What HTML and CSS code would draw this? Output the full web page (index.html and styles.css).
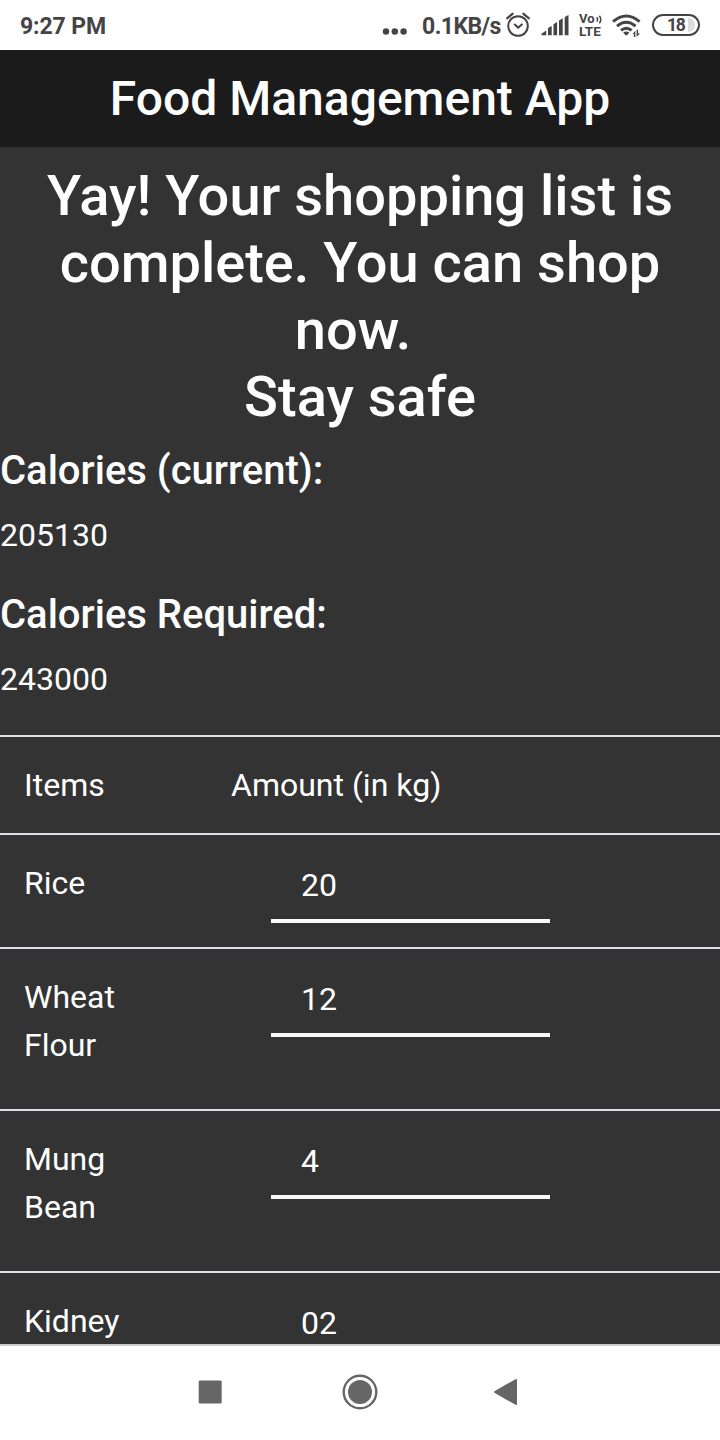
FILE: index.html
```html
<!DOCTYPE html>
<html lang="en">
<head>
<meta charset="utf-8">
<title>Food Management App</title>
<link rel="stylesheet" href="styles.css">
</head>
<body>
<div class="screen">
  <div class="status">
    <span class="clock">9:27 PM</span>
    <svg class="dots" width="26" height="8" viewBox="0 0 26 8"><circle cx="4" cy="4.5" r="3.2"/><circle cx="12.8" cy="4.5" r="3.2"/><circle cx="21.6" cy="4.5" r="3.2"/></svg>
    <span class="speed">0.1KB/s</span>
    <svg class="alarm" width="26" height="26" viewBox="0 0 26 26" fill="none" stroke="#444" stroke-width="2"><circle cx="13" cy="14" r="9.8"/><path d="M9.2 12l3.9 3.6 4.4-3.6" /><path d="M2.3 6.2l5.2-4.4M23.7 6.2l-5.2-4.4" stroke-width="2.3" stroke-linecap="round"/></svg>
    <svg class="signal" width="28" height="21" viewBox="0 0 28 21"><path d="M.5 20.3v-1.6l4.7-3.2v4.8zM7 12.9l3.7-2v9.4H7zM12.5 9.2l3.6-2.3v13.4h-3.6zM18 5.4l3.7-2.2v17.1H18zM23.7 2l3.8-2v20.3h-3.8z"/></svg>
    <div class="volte">
      <div class="volte-top">Vo<svg width="6" height="9" viewBox="0 0 6 9" fill="none" stroke="#444" stroke-width="1.5"><path d="M.8 2.2q1.6 2.2 0 4.4M3.4.7q2.8 3.8 0 7.6"/></svg></div>
      <div class="volte-bottom">LTE</div>
    </div>
    <svg class="wifi" width="30" height="24" viewBox="0 0 30 24"><g fill="none" stroke="#444" stroke-width="3"><path d="M1 7.6q13.2-11.2 26.6 0"/><path d="M5 12.2q9.3-7.8 18.6 0"/><path d="M9 16.4q5.3-4.4 10.6 0"/></g><path d="M11.2 18.6q3.1-2.4 6.2 0L15.2 21q-.9.7-1.8 0z"/><path d="M20.6 19.9l2.7-3.2v6.4h-1.5v-3.2zM24.6 15.8h1.5v3.6h2l-3.5 3.4z"/></svg>
    <div class="battery"><span>18</span></div>
  </div>
  <header class="bar">Food Management App</header>
  <main class="content">
    <h1>Yay! Your shopping list is complete. You can shop now.&nbsp;<br>Stay safe</h1>
    <h5>Calories (current):</h5>
    <p>205130</p>
    <h5>Calories Required:</h5>
    <p>243000</p>
    <div class="table">
      <div class="row head"><div>Items</div><div>Amount (in kg)</div></div>
      <div class="row"><div>Rice</div><div class="field">20</div></div>
      <div class="row tall"><div>Wheat Flour</div><div class="field">12</div></div>
      <div class="row tall"><div>Mung Bean</div><div class="field">4</div></div>
      <div class="row last"><div>Kidney</div><div class="field">02</div></div>
    </div>
  </main>
  <nav class="nav">
    <svg width="24" height="24" viewBox="0 0 24 24"><rect x=".7" y=".5" width="23" height="23" rx="1.2"/></svg>
    <svg width="36" height="36" viewBox="0 0 36 36"><circle cx="18" cy="18" r="16.3" fill="none" stroke="#666" stroke-width="2.4"/><circle cx="18" cy="18" r="12"/></svg>
    <svg width="24" height="28" viewBox="0 0 24 28"><path d="M.8 12.9L21.5 1.2q1.5-.7 1.5.8v24q0 1.5-1.5.8L.8 15.1q-1.5-1.1 0-2.2z"/></svg>
  </nav>
</div>
</body>
</html>
```
FILE: styles.css
```css
* { box-sizing: border-box; }
body { margin: 0; font-family: Roboto, "Noto Sans", sans-serif; }
.screen { width: 720px; height: 1440px; display: flex; flex-direction: column; overflow: hidden; background: #333; color: #fff; }

.status { flex: none; height: 50px; display: flex; align-items: flex-start; background: #fff; color: #444; fill: #444; padding-left: 20px; font-weight: 700; }
.status svg { flex: none; }
.clock { font-size: 23px; line-height: 28px; letter-spacing: -.1px; margin-top: 13px; width: 362px; white-space: nowrap; }
.dots { margin-top: 27px; }
.speed { font-size: 23px; line-height: 28px; letter-spacing: -.55px; margin: 13px 0 0 14px; width: 83px; white-space: nowrap; }
.alarm { margin-top: 12px; }
.signal { margin: 15px 0 0 10px; }
.volte { width: 24px; margin: 13px 0 0 10px; }
.volte-top { display: flex; height: 12px; font-size: 13px; line-height: 12px; }
.volte-top svg { margin: 2px 0 0 1px; }
.volte-bottom { font-size: 13.5px; line-height: 13px; }
.wifi { margin: 14px 0 0 9px; }
.battery { width: 48px; height: 22px; margin: 14px 0 0 10px; border: 2.5px solid #444; border-radius: 11px; padding: 2px; }
.battery span { display: block; width: 39px; height: 14px; border-radius: 7px; background: linear-gradient(to right, #fff 32px, #ddd 32px); font-size: 17.5px; line-height: 14px; padding-left: 11px; letter-spacing: -1.2px; }

.bar { flex: none; height: 97px; background: #1b1b1b; font-size: 48px; font-weight: 500; line-height: 97px; text-align: center; }

.content { height: 1197px; padding-top: 16px; overflow: hidden; font-size: 32px; line-height: 48px; }
h1 { margin: 0 0 16px; font-size: 56px; font-weight: 500; line-height: 67px; text-align: center; }
h5 { margin: 0 0 16px; font-size: 40px; font-weight: 500; line-height: 48px; }
p { margin: 0 0 32px; }

.row { display: grid; grid-template-columns: 207px 1fr; height: 114px; border-top: 2px solid #dee2e6; padding: 24px 24px 0; }
.row > :first-child { padding-right: 70px; }
.head { height: 98px; }
.tall { height: 162px; }
.field { width: 279px; height: 64px; margin-left: 40px; padding: 2px 30px 0; border-bottom: 4px solid #f8f9fa; }

.nav { flex: none; height: 96px; border-top: 2px solid #ccc; background: #fff; fill: #666; display: flex; align-items: center; gap: 116px; padding: 0 0 2px 198px; }
.nav svg { flex: none; }
.nav svg:nth-child(2) { margin: 0 .5px 0 3.5px; }
```
